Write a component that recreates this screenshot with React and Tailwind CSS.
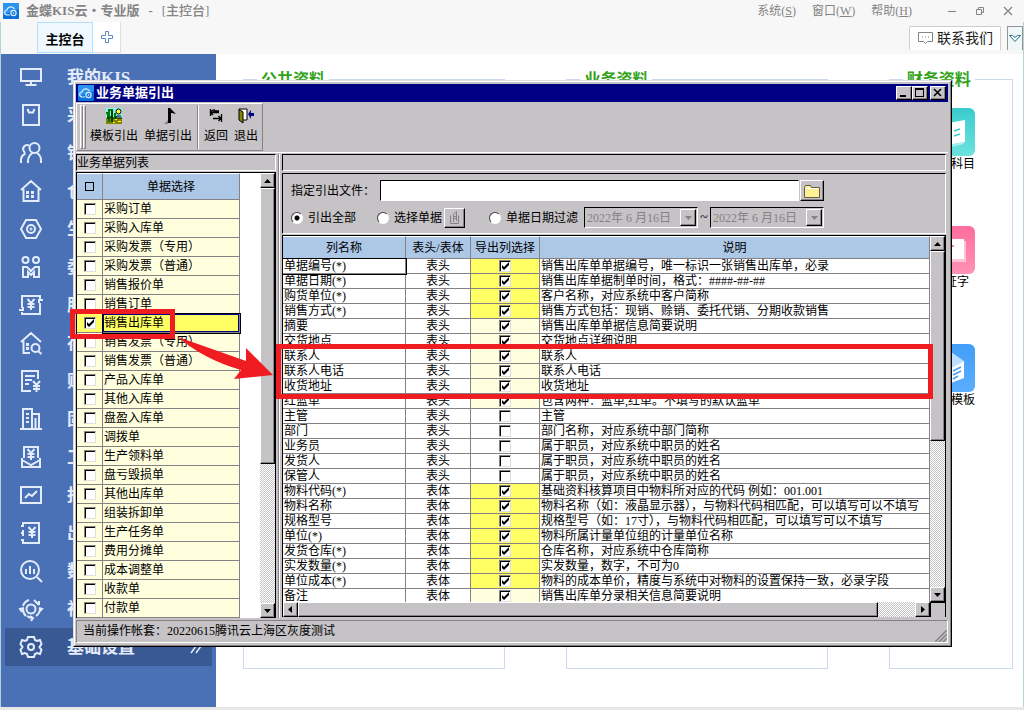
const navItems = [
  { label: "我的KIS", icon: "monitor" },
  { label: "采购", icon: "bag" },
  { label: "销售", icon: "people" },
  { label: "仓存", icon: "house" },
  { label: "生产", icon: "hexagon" },
  { label: "委外", icon: "outsource" },
  { label: "服务", icon: "receivable" },
  { label: "存货", icon: "houseSearch" },
  { label: "财务", icon: "bill" },
  { label: "固定", icon: "building" },
  { label: "工资", icon: "salary" },
  { label: "报表", icon: "chart" },
  { label: "出纳", icon: "cashbook" },
  { label: "数据", icon: "analysis" },
  { label: "社区", icon: "service" },
  { label: "基础设置", icon: "gear", active: true },
];

const bills = [
  "采购订单",
  "采购入库单",
  "采购发票（专用）",
  "采购发票（普通）",
  "销售报价单",
  "销售订单",
  "销售出库单",
  "销售发票（专用）",
  "销售发票（普通）",
  "产品入库单",
  "其他入库单",
  "盘盈入库单",
  "调拨单",
  "生产领料单",
  "盘亏毁损单",
  "其他出库单",
  "组装拆卸单",
  "生产任务单",
  "费用分摊单",
  "成本调整单",
  "收款单",
  "付款单",
];

// level: 2 = required column, 1 = selected by default, 0 = optional
const columns = [
  { name: "单据编号(*)", part: "表头", level: 2, desc: "销售出库单单据编号，唯一标识一张销售出库单，必录" },
  { name: "单据日期(*)", part: "表头", level: 2, desc: "销售出库单据制单时间，格式：####-##-##" },
  { name: "购货单位(*)", part: "表头", level: 2, desc: "客户名称，对应系统中客户简称" },
  { name: "销售方式(*)", part: "表头", level: 2, desc: "销售方式包括：现销、赊销、委托代销、分期收款销售" },
  { name: "摘要", part: "表头", level: 1, desc: "销售出库单单据信息简要说明" },
  { name: "交货地点", part: "表头", level: 1, desc: "交货地点详细说明" },
  { name: "联系人", part: "表头", level: 1, desc: "联系人" },
  { name: "联系人电话", part: "表头", level: 1, desc: "联系人电话" },
  { name: "收货地址", part: "表头", level: 1, desc: "收货地址" },
  { name: "红蓝单", part: "表头", level: 1, desc: "包含两种：蓝单,红单。不填写的默认蓝单" },
  { name: "主管", part: "表头", level: 0, desc: "主管" },
  { name: "部门", part: "表头", level: 0, desc: "部门名称，对应系统中部门简称" },
  { name: "业务员", part: "表头", level: 0, desc: "属于职员，对应系统中职员的姓名" },
  { name: "发货人", part: "表头", level: 0, desc: "属于职员，对应系统中职员的姓名" },
  { name: "保管人", part: "表头", level: 0, desc: "属于职员，对应系统中职员的姓名" },
  { name: "物料代码(*)", part: "表体", level: 2, desc: "基础资料核算项目中物料所对应的代码 例如：001.001" },
  { name: "物料名称", part: "表体", level: 2, desc: "物料名称（如：液晶显示器），与物料代码相匹配，可以填写可以不填写" },
  { name: "规格型号", part: "表体", level: 2, desc: "规格型号（如：17寸），与物料代码相匹配，可以填写可以不填写" },
  { name: "单位(*)", part: "表体", level: 2, desc: "物料所属计量单位组的计量单位名称" },
  { name: "发货仓库(*)", part: "表体", level: 2, desc: "仓库名称，对应系统中仓库简称" },
  { name: "实发数量(*)", part: "表体", level: 2, desc: "实发数量，数字，不可为0" },
  { name: "单位成本(*)", part: "表体", level: 2, desc: "物料的成本单价，精度与系统中对物料的设置保持一致，必录字段" },
  { name: "备注", part: "表体", level: 1, desc: "销售出库单分录相关信息简要说明" },
];

const levelBg = ["bg-white", "bg-[#ffffde]", "bg-[#ffff63]"];

const raised =
  "bg-[#c6c3c6] border border-t-white border-l-white border-r-black border-b-black shadow-[inset_-1px_-1px_0_#848284]";
const sunken =
  "border border-t-black border-l-black border-r-white border-b-white";
const track =
  "bg-[repeating-conic-gradient(#c6c3c6_0_25%,#ffffff_0_50%)] bg-[length:2px_2px]";

function Yen({ x = 0, y = 0 }) {
  return (
    <path
      transform={`translate(${x} ${y})`}
      d="M7.5 5l3.5 4 3.5-4M11 9v7M7.5 10h7M7.5 13h7"
    />
  );
}

const navIcons = {
  monitor: <path d="M1 3h20v12H1zM11 15v4M5.500 19h11" />,
  bag: <path d="M3 1h16v20H3zM7.500 5l1.500 3.500h4L14.500 5" />,
  people: (
    <>
      <circle cx="14.500" cy="6" r="5" />
      <path d="M9 3.500a4 4 0 0 0-5 6l1 1.500M1 21v-3c0-3 1.500-5 4.500-6.500M8 21v-2c0-4 1.500-6 4.500-8M17 11c3 2 4 4 4 7v3" />
    </>
  ),
  house: (
    <path d="M1 10L11 1l10 9M3.500 9v12h15V9M7 12h1v1H7zM7 16h1v1H7zM12 12h1v1h-1zM12 16h1v1h-1z" />
  ),
  hexagon: (
    <>
      <path d="M6 2h10l5 9-5 9H6l-5-9z" />
      <circle cx="11" cy="11" r="4" />
      <circle cx="11" cy="11" r="0.500" />
    </>
  ),
  outsource: (
    <>
      <circle cx="5.500" cy="4" r="3" />
      <circle cx="16" cy="4" r="3" />
      <path d="M3 21V11h4l4 4 4-4h4v10h-5v-5l-3 3-3-3v5z" />
    </>
  ),
  receivable: (
    <>
      <path d="M2 14V2h18v3M20 9v11H2v-2M23 6h-4v3M-1 16h4v-3" />
      <Yen />
    </>
  ),
  houseSearch: (
    <>
      <path d="M1 10L11 1l10 9M3.500 9v12H10M7 12h1v1H7zM7 16h1v1H7zM18 19l3.500 3" />
      <circle cx="15.500" cy="16" r="4" />
    </>
  ),
  bill: (
    <>
      <path d="M18 9V1H2v20h9M5 6h10M5 10h7M5 14h4" />
      <path d="M13 11l3.500 4 3.500-4M16.500 15v7M13 16h7M13 19h7" />
    </>
  ),
  building: (
    <path d="M0 21h22M3 21V1h9v20M12 6h7v15M6 6h3M6 10h3M6 14h3M15.500 10v11" />
  ),
  salary: (
    <>
      <path d="M4 12V1h14v11M2 12v9h18v-9M2 14l9 5 9-5" />
      <Yen y={-2} />
    </>
  ),
  chart: <path d="M1 3h20v16H1zM5 14l4-4 3 2 5-5" />,
  cashbook: (
    <>
      <path d="M3 5V1h16v20H3v-4M3 8v6M1 4h3M1 11h3M1 18h3" />
      <Yen x={1} />
    </>
  ),
  analysis: (
    <>
      <circle cx="10" cy="10" r="9" />
      <path d="M6 9v5M10 6v8M14 9v5M17 17l5 5" />
    </>
  ),
  service: (
    <>
      <circle cx="11" cy="11" r="4.500" />
      <path d="M3 8a9 9 0 0 1 6-6M14 2l5 5M19 7V3M20 11a9 9 0 0 1-4 7M19 14l3-3-3-1M13 20a9 9 0 0 1-6-2M10 18l3 2-2 3M2 14l-2-3 4-1M3 11a9 9 0 0 0 3 7" />
    </>
  ),
  gear: (
    <>
      <path d="M8 1h6l1 3 2 1 3-1 1.500 4-2 3 2 3-1.500 4-3-1-2 1-1 3H8l-1-3-2-1-3 1-1.500-4 2-3-2-3L2 4l3 1 2-1z" />
      <circle cx="11" cy="11" r="3" />
    </>
  ),
};

function NavIcon({ name }) {
  return (
    <svg
      viewBox="0 0 22 22"
      className="h-[22px] w-[22px] shrink-0 overflow-visible"
      fill="none"
      stroke="#e4ecfc"
      strokeWidth="2"
    >
      {navIcons[name]}
    </svg>
  );
}

function Logo() {
  return (
    <svg viewBox="0 0 16 16" className="h-4 w-4 shrink-0">
      <rect width="16" height="16" rx="1" fill="#0a72d6" />
      <path d="M0 0h16v6L0 12z" fill="#2a94ee" />
      <path
        d="M7 12H4.500a2.500 2.500 0 0 1-.5-5 4 4 0 0 1 7.500-1"
        fill="none"
        stroke="#d8efff"
        strokeWidth="1.200"
      />
      <circle cx="10.500" cy="10" r="2.600" fill="none" stroke="#d8efff" strokeWidth="1.200" />
      <circle cx="10.500" cy="10" r="0.800" fill="#d8efff" />
    </svg>
  );
}

function Checkbox({ label, checked }) {
  return (
    <span className="inline-grid h-3 w-3 align-top">
      <input
        type="checkbox"
        aria-label={label}
        defaultChecked={checked}
        className="peer h-3 w-3 appearance-none border border-t-[#848284] border-l-[#848284] border-r-[#dedfde] border-b-[#dedfde] bg-white shadow-[inset_1px_1px_0_#000] [grid-area:1/1]"
      />
      <svg
        viewBox="0 0 12 12"
        className="pointer-events-none invisible h-3 w-3 [grid-area:1/1] peer-checked:visible"
      >
        <path d="M3 5v3l2 2 5-5V2L5 7z" fill="#000" />
      </svg>
    </span>
  );
}

function Arrow({ dir, color = "#000" }) {
  const shapes = {
    up: "M0 6h7L3.500 2z",
    down: "M0 2h7L3.500 6z",
    left: "M5 0v7L1 3.500z",
    right: "M2 0v7l4-3.500z",
  };
  return (
    <svg viewBox="0 0 7 7" className="h-[7px] w-[7px]">
      <path d={shapes[dir]} fill={color} />
    </svg>
  );
}

function ScrollButton({ dir, label }) {
  return (
    <button
      aria-label={label}
      className={`flex h-[15px] w-[15px] shrink-0 items-center justify-center ${raised}`}
    >
      <Arrow dir={dir} />
    </button>
  );
}

function ToolButton({ label, children }) {
  return (
    <button className="flex shrink-0 flex-col items-center gap-1 px-[3px] pt-1 whitespace-nowrap">
      <svg viewBox="0 0 16 16" className="h-4 w-4 shrink-0">
        {children}
      </svg>
      <span className="leading-4">{label}</span>
    </button>
  );
}

function Radio({ id, label, checked }) {
  return (
    <span className="flex items-center gap-[5px]">
      <input
        type="radio"
        id={id}
        name="scope"
        defaultChecked={checked}
        className="h-3 w-3 appearance-none rounded-full border border-t-[#424142] border-l-[#424142] border-r-white border-b-white bg-white checked:bg-[radial-gradient(circle,#000_2px,#fff_3px)]"
      />
      <label htmlFor={id}>{label}</label>
    </span>
  );
}

function DateBox({ label }) {
  return (
    <span className={`flex h-[21px] w-[114px] p-px ${sunken}`}>
      <input
        aria-label={label}
        disabled
        defaultValue="2022年 6 月16日"
        className="w-full min-w-0 flex-1 bg-transparent pl-px text-[#848284]"
      />
      <button
        disabled
        aria-label="选择日期"
        className={`flex w-4 items-center justify-center ${raised}`}
      >
        <Arrow dir="down" color="#848284" />
      </button>
    </span>
  );
}

function TitleBar() {
  return (
    <header className="flex h-[22px] items-center bg-[#f7f7f7] pr-2 pl-[3px] text-[#848484]">
      <Logo />
      <h1 className="ml-[7px] flex gap-[9px] text-[13px] leading-[22px] font-bold">
        <span>金蝶KIS云・专业版</span>
        <span>-</span>
        <span className="font-medium">[主控台]</span>
      </h1>
      <div className="ml-auto flex gap-4 pr-8">
        <button>系统(<u>S</u>)</button>
        <button>窗口(<u>W</u>)</button>
        <button>帮助(<u>H</u>)</button>
      </div>
      <div className="flex gap-3">
        <button aria-label="最小化">
          <svg viewBox="0 0 16 16" className="h-4 w-4" stroke="#848484">
            <path d="M4 8.500h8" />
          </svg>
        </button>
        <button aria-label="还原">
          <svg viewBox="0 0 16 16" className="h-4 w-4" fill="none" stroke="#848484">
            <path d="M4.500 6.500h5v5h-5zM6.500 6V4.500h5v5H10" />
          </svg>
        </button>
        <button aria-label="关闭">
          <svg viewBox="0 0 16 16" className="h-4 w-4" stroke="#848484" strokeWidth="1.300">
            <path d="M4 4l8 8M12 4l-8 8" />
          </svg>
        </button>
      </div>
    </header>
  );
}

function TabBar() {
  return (
    <div className="flex h-8 bg-[#f7f7f7] pl-9">
      <button className="h-[31px] w-14 border border-[#b5dfff] bg-[#eff7ff] pt-1 text-[13px] font-bold">
        主控台
      </button>
      <button
        aria-label="新建标签"
        className="flex h-[31px] w-7 items-center justify-center border-r border-b border-[#dedede] bg-white"
      >
        <svg viewBox="0 0 12 12" className="h-3 w-3" fill="none" stroke="#5a86c6">
          <path d="M4.500.5h3v4h4v3h-4v4h-3v-4h-4v-3h4z" />
        </svg>
      </button>
      <button className="mt-1 ml-auto flex h-6 w-[92px] items-center gap-1 rounded-t-xs border border-b-0 border-[#cecece] bg-white pl-2 text-sm text-[#212121]">
        <svg viewBox="0 0 15 13" className="h-[13px] w-[15px]" fill="none" stroke="#848484">
          <path d="M.5.5h14v9h-5l-2 2-2-2h-5z" />
          <path d="M4 5h1M7 5h1M10 5h1" />
        </svg>
        联系我们
      </button>
      <button
        aria-label="更多"
        className="mt-1 ml-[6px] flex h-6 w-4 items-center justify-center border border-b-0 border-[#949694] bg-[#eff7f7]"
      >
        <svg viewBox="0 0 12 9" className="h-[9px] w-3 shrink-0" fill="none" stroke="#31718c">
          <path d="M.5 1.500h3L6 3.500l2.500-2h3L6 7.500z" />
        </svg>
      </button>
    </div>
  );
}

function Sidebar() {
  return (
    <nav className="h-full w-[215px] shrink-0 bg-[#4a71b5] px-1 pt-1 pb-[41px]">
      {navItems.map((item) => (
        <a
          key={item.label}
          href="#"
          className={`flex h-[38px] items-center gap-[25px] pr-2 pl-[15px] text-[17px] font-bold whitespace-nowrap text-[#e4ecfc] ${
            item.active ? "bg-[#395994]" : ""
          }`}
        >
          <NavIcon name={item.icon} />
          <span className="pt-[3px]">{item.label}</span>
          {item.active && (
            <svg
              viewBox="0 0 14 14"
              className="ml-auto h-[14px] w-[14px]"
              stroke="#e4ecfc"
              strokeWidth="1.500"
            >
              <path d="M1 13L9 2M6 13l8-11" />
            </svg>
          )}
        </a>
      ))}
    </nav>
  );
}

function Shortcut({ label, tile, children }) {
  return (
    <a href="#" className="flex flex-col items-center leading-[17px] text-black">
      <span className={`h-12 w-12 rounded-md ${tile}`}>
        <svg viewBox="0 0 48 48" className="h-12 w-12">
          {children}
        </svg>
      </span>
      {label}
    </a>
  );
}

function Group({ title, children }) {
  return (
    <fieldset className="min-w-0 border border-[#ced9ef]">
      <legend className="ml-[13px] px-1 pt-[2px] text-base leading-5 font-bold text-[#31a218]">
        {title}
      </legend>
      {children}
    </fieldset>
  );
}

function Workspace() {
  return (
    <main className="grid flex-1 grid-cols-[262fr_261fr_124fr] gap-[61px] bg-white pt-[14px] pr-[10px] pb-[38px] pl-[27px]">
      <Group title="公共资料" />
      <Group title="业务资料" />
      <Group title="财务资料">
        <div className="flex flex-col gap-[53px] pt-[18px]">
          <Shortcut label="会计科目" tile="bg-gradient-to-b from-[#39cbce] to-[#6be3de]">
            <path d="M16 16l22-4v22l-22 4z" fill="#fff" />
            <path d="M16 38l21-4v2l-21 5z" fill="#a5efef" />
            <path d="M27 23l6-2M27 28l6-2" stroke="#39cbce" strokeWidth="1.500" />
          </Shortcut>
          <Shortcut label="凭证字" tile="bg-gradient-to-b from-[#ff6d9c] to-[#ff92b5]">
            <path d="M13 15h26v21H13z" fill="#ffc3d6" />
            <path d="M12 13h25v20H12z" fill="#fff" />
            <path d="M18 20h9" stroke="#ff7ba5" strokeWidth="2" />
          </Shortcut>
          <Shortcut label="凭证模板" tile="bg-gradient-to-b from-[#429ef7] to-[#5aaeff]">
            <path d="M24 8l13 9-13 7-13-7z" fill="#bddfff" />
            <path d="M24 24l13-7v17l-13 5z" fill="#fff" />
            <path d="M11 17l13 7v15l-13-5z" fill="#deefff" />
            <path d="M26 27l8-4M26 31l8-4M26 35l5-3" stroke="#429ef7" strokeWidth="1.500" />
          </Shortcut>
        </div>
      </Group>
    </main>
  );
}

function BillList() {
  return (
    <section className="flex w-[200px] shrink-0 flex-col">
      <h3 className={`mb-px h-[17px] leading-4 ${sunken}`}>业务单据列表</h3>
      <div className="flex border-t border-r border-l border-black bg-white">
        <div className="flex-1">
          <table className="w-[163px] table-fixed border-separate border-spacing-0">
            <thead>
              <tr className="h-[27px] bg-[#adc7e7]">
                <th className="w-[26px] border-t border-r border-b border-t-white border-r-[#848284] border-b-[#848284] p-0">
                  <span className="mx-auto block h-[9px] w-[9px] border border-black" />
                </th>
                <th className="border-t border-r border-b border-t-white border-r-[#848284] border-b-[#848284] p-0 font-normal">
                  单据选择
                </th>
              </tr>
            </thead>
            <tbody>
              {bills.map((bill) => {
                const on = bill === "销售出库单";
                return (
                  <tr key={bill} className={on ? "bg-[#ffff63]" : "bg-[#ffffde]"}>
                    <td className="h-[19px] border-r border-b border-[#848284] p-0 text-center leading-3">
                      <Checkbox label={bill} checked={on} />
                    </td>
                    <td
                      className={`h-[19px] border-r border-b border-[#848284] p-0 pl-px leading-[18px] ${
                        on ? "shadow-[inset_0_0_0_1px_#000084] outline outline-black" : ""
                      }`}
                    >
                      {bill}
                    </td>
                  </tr>
                );
              })}
            </tbody>
          </table>
        </div>
        <div className="flex w-[15px] flex-col">
          <ScrollButton dir="up" label="向上滚动" />
          <div className={`flex-1 ${track}`}>
            <div className={`h-[276px] ${raised}`} />
          </div>
          <ScrollButton dir="down" label="向下滚动" />
        </div>
      </div>
    </section>
  );
}

function ExportOptions() {
  return (
    <div className={`mt-[2px] mb-px h-[61px] pl-2 ${sunken}`}>
      <div className="mt-[6px] flex items-center">
        <label htmlFor="file" className="w-[89px]">
          指定引出文件：
        </label>
        <input id="file" className={`h-[21px] w-[419px] bg-white px-1 ${sunken}`} />
        <button
          aria-label="浏览"
          className={`ml-px flex h-[21px] w-6 items-center justify-center ${raised}`}
        >
          <svg viewBox="0 0 16 14" className="h-[14px] w-4">
            <path d="M.5 3.500l1-2h5l1 2h8v10H.5z" fill="#ffef94" stroke="#635d42" />
            <path d="M1.500 4.500h13" stroke="#fff" />
          </svg>
        </button>
      </div>
      <div className="mt-[6px] flex items-center whitespace-nowrap">
        <div className="flex w-[86px]">
          <Radio id="scope-all" label="引出全部" checked />
        </div>
        <div className="flex w-[112px] items-center gap-[2px]">
          <Radio id="scope-bill" label="选择单据" />
          <button
            aria-label="选择单据"
            className={`flex h-5 w-[21px] items-center justify-center ${raised}`}
          >
            <svg viewBox="0 0 12 14" className="h-[14px] w-3" fill="none" stroke="#848284">
              <path d="M1.500 4.500v8h8v-8M4.500 11V3.500L7.500.5V10M5 5.500h2M5 7.500h2" />
            </svg>
          </button>
        </div>
        <div className="flex w-[95px]">
          <Radio id="scope-date" label="单据日期过滤" />
        </div>
        <DateBox label="开始日期" />
        <span className="w-3 text-center text-sm leading-5">~</span>
        <DateBox label="结束日期" />
      </div>
    </div>
  );
}

function ColumnTable() {
  const head =
    "border-t border-r border-b border-t-white border-r-[#848284] border-b-[#848284] p-0 font-normal";
  const cell = "h-[15px] border-r border-b border-[#848284] p-0";
  return (
    <div className="border-t border-r border-l border-black bg-[#c6c3c6]">
      <div className="flex h-[366px]">
        <div className="min-w-0 flex-1 overflow-hidden bg-white">
          <table className="w-full table-fixed border-separate border-spacing-0 leading-[14px] whitespace-nowrap">
            <thead>
              <tr className="h-[23px] bg-[#adc7e7]">
                <th className={`w-[123px] ${head}`}>列名称</th>
                <th className={`w-[65px] ${head}`}>表头/表体</th>
                <th className={`w-[69px] ${head}`}>导出列选择</th>
                <th className={head}>说明</th>
              </tr>
            </thead>
            <tbody>
              {columns.map((col, i) => (
                <tr key={col.name}>
                  <td className={`${cell} pl-px ${i === 0 ? "outline outline-black" : ""}`}>
                    {col.name}
                  </td>
                  <td className={`${cell} text-center`}>{col.part}</td>
                  <td className={`${cell} text-center leading-3 ${levelBg[col.level]}`}>
                    <Checkbox label={col.name} checked={col.level > 0} />
                  </td>
                  <td className={`${cell} pl-px`}>{col.desc}</td>
                </tr>
              ))}
            </tbody>
          </table>
        </div>
        <div className="flex w-[15px] flex-col">
          <ScrollButton dir="up" label="向上滚动" />
          <div className={`flex-1 ${track}`}>
            <div className={`h-[190px] ${raised}`} />
          </div>
          <ScrollButton dir="down" label="向下滚动" />
        </div>
      </div>
      <div className="flex h-[15px]">
        <ScrollButton dir="left" label="向左滚动" />
        <div className={`flex flex-1 ${track}`}>
          <div className={`w-[94%] ${raised}`} />
        </div>
        <ScrollButton dir="right" label="向右滚动" />
        <div className="w-[15px] border-t border-l border-black" />
      </div>
    </div>
  );
}

function Callouts() {
  return (
    <>
      <div className="absolute top-[228px] -left-1 h-[30px] w-[105px] border-5 border-[#ef1c21]" />
      <div className="absolute top-[263px] right-[18px] left-[202px] h-[55px] border-5 border-[#ef1c21]" />
      <svg
        viewBox="0 0 100 44"
        className="absolute top-[256px] left-[99px] h-11 w-[100px]"
        fill="#ef1c21"
      >
        <path d="M5 0L73 24V11l27 27-39 4 7-9Q30 22 5 0z" />
      </svg>
    </>
  );
}

function ExportDialog() {
  return (
    <div
      role="dialog"
      aria-label="业务单据引出"
      className="absolute top-20 right-[72px] left-[73px] border border-t-[#dedfde] border-l-[#dedfde] border-r-black border-b-black bg-[#c6c3c6] text-black"
    >
      <div className="border border-t-white border-l-white border-r-[#848284] border-b-[#848284] pt-[2px] pr-[2px] pb-[2px] pl-px">
        <div className="flex h-[18px] items-center bg-[#000084] pr-[2px] pl-[2px] text-white">
          <Logo />
          <h2 className="ml-[2px] text-[13px] leading-[18px] font-bold">业务单据引出</h2>
          <button aria-label="最小化" className={`ml-auto h-[14px] w-4 ${raised}`}>
            <svg viewBox="0 0 14 12" className="h-3 w-[14px]">
              <path d="M3 8h6v2H3z" />
            </svg>
          </button>
          <button aria-label="最大化" className={`h-[14px] w-4 ${raised}`}>
            <svg viewBox="0 0 14 12" className="h-3 w-[14px]">
              <path d="M2 1h9v9H2zM3 3v6h7V3z" fillRule="evenodd" />
            </svg>
          </button>
          <button aria-label="关闭" className={`ml-[2px] h-[14px] w-4 ${raised}`}>
            <svg viewBox="0 0 14 12" className="h-3 w-[14px]" stroke="#000" strokeWidth="1.600">
              <path d="M3 2l7 7M10 2L3 9" />
            </svg>
          </button>
        </div>

        {/* Toolbar */}
        <div className="border-b border-white pt-px pb-px">
          <div className="flex h-12 w-[187px] border border-t-white border-l-white border-r-[#848284] border-b-[#848284]">
            <div className="my-px ml-[3px] w-[3px] shrink-0 border border-t-white border-l-white border-r-[#848284] border-b-[#848284]" />
            <div className="my-px mr-px w-[3px] shrink-0 border border-t-white border-l-white border-r-[#848284] border-b-[#848284]" />
            <ToolButton label="模板引出">
              <path d="M0 0h16v10H0z" fill="#84f3f7" />
              <path d="M0 10h16v6H0z" fill="#848200" />
              <path d="M2 11h2v1H2zM9 11h2v1H9zM12 13h3v1h-3zM7 14h2v1H7z" fill="#ffff00" />
              <circle cx="12.500" cy="3.500" r="2.500" fill="#ffff31" stroke="#000" />
              <path d="M3 14V2h3v12M0 5h2v4h4M6 10h3V5" fill="none" stroke="#007d00" strokeWidth="2" />
              <path d="M6 2v12M1 10h3M15 8h-4l-2 2h7" fill="none" stroke="#000" />
            </ToolButton>
            <ToolButton label="单据引出">
              <path d="M8 0h2l6 6-4-1h-1v10H8z" />
              <path d="M4 16l4-4v4z" fill="#848284" />
            </ToolButton>
            <div className="mx-[2px] my-px w-[2px] shrink-0 border-r border-l border-l-[#848284] border-r-white" />
            <ToolButton label="返回">
              <path
                d="M2.500 1v7M2 4.500h9M5 2L2.500 4.500 5 7M13.500 6v8M5 10.500h8M10.500 8l2.500 2.500-2.500 2.500M6 1v2h5"
                fill="none"
                stroke="#000"
                strokeWidth="1.300"
              />
            </ToolButton>
            <ToolButton label="退出">
              <path d="M1 1h8v11H5" fill="#fff" stroke="#000" />
              <path d="M1 1l4 3v11l-4-3z" fill="#848200" stroke="#000" />
              <path d="M10 6l3-4v3h3v3h-3v3z" fill="#000084" />
            </ToolButton>
          </div>
        </div>

        <div className="flex pt-px">
          <BillList />
          <div className="mx-[2px] w-[2px] border-r border-l border-l-[#848284] border-r-white" />
          <section className="mr-[2px] min-w-0 flex-1">
            <div className={`h-[17px] ${sunken}`} />
            <ExportOptions />
            <ColumnTable />
          </section>
        </div>

        <div className="mt-[2px] flex h-[23px] justify-between border border-t-[#848284] border-l-[#848284] border-r-white border-b-white pl-[6px] leading-[21px]">
          <span>当前操作帐套：20220615腾讯云上海区灰度测试</span>
          <svg viewBox="0 0 12 12" className="mt-auto h-3 w-3" stroke="#848284" strokeWidth="1.500">
            <path d="M0 12L12 0M4 12l8-8M8 12l4-4" />
          </svg>
        </div>
      </div>
      <Callouts />
    </div>
  );
}

export default function App() {
  return (
    <div className="relative flex min-h-screen flex-col bg-[#f7f7f7] font-['Liberation_Serif','Noto_Sans_CJK_SC',sans-serif] text-xs">
      <TitleBar />
      <div className="flex flex-1 flex-col border-x border-[#b5d3d6]">
        <TabBar />
        <div className="flex flex-1">
          <Sidebar />
          <Workspace />
        </div>
      </div>
      <footer className="h-[3px] bg-[#e7e7e7]" />
      <ExportDialog />
    </div>
  );
}
